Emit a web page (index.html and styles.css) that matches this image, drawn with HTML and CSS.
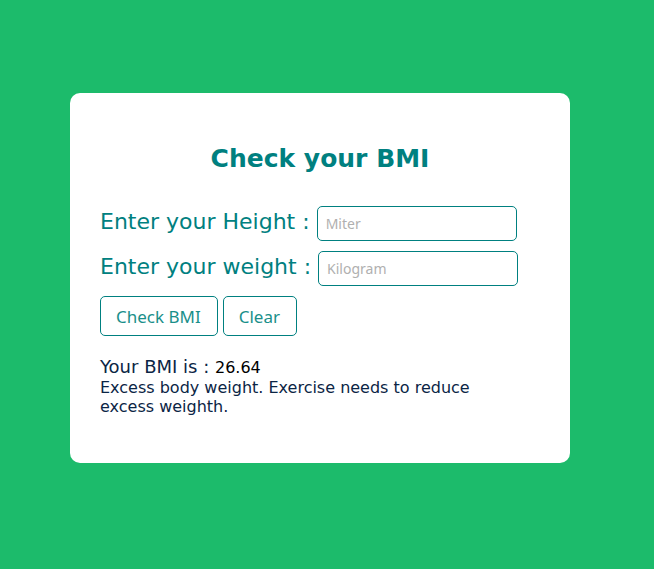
FILE: index.html
```html
<!DOCTYPE html>
<html>
<head>
<meta charset="utf-8">
<link rel="stylesheet" href="styles.css">
</head>
<body>
<div class="page">
  <div class="card">
    <h1 class="title">Check your BMI</h1>
    <div class="row">
      <label class="label">Enter your Height :</label>
      <input class="field" type="text" placeholder="Miter">
    </div>
    <div class="row">
      <label class="label">Enter your weight :</label>
      <input class="field" type="text" placeholder="Kilogram">
    </div>
    <div class="buttons">
      <button class="btn">Check BMI</button>
      <button class="btn">Clear</button>
    </div>
    <div class="result">
      <div class="bmi">Your BMI is : <span class="value">26.64</span></div>
      <div class="msg">Excess body weight. Exercise needs to reduce excess weighth.</div>
    </div>
  </div>
</div>
</body>
</html>
```
FILE: styles.css
```css
html, body {
  margin: 0;
  padding: 0;
  background: #1cbb6b;
  height: 100%;
}
.page {
  padding-top: 93px;
  padding-left: 70px;
}
.card {
  width: 500px;
  height: 370px;
  box-sizing: border-box;
  background: #fff;
  border-radius: 10px;
  padding: 46px 30px 0 30px;
  font-family: "DejaVu Sans", sans-serif;
}
.title {
  margin: 0 0 27px 0;
  text-align: center;
  color: #008080;
  font-size: 25px;
  line-height: 40px;
  font-weight: bold;
}
.row {
  display: flex;
  align-items: center;
  gap: 7px;
  margin-bottom: 10px;
}
.label {
  color: #008080;
  font-size: 22px;
  line-height: 28px;
  position: relative;
  top: -2px;
}
.field {
  width: 200px;
  height: 35px;
  box-sizing: border-box;
  border: 1px solid #008080;
  border-radius: 5px;
  padding: 0 8px;
  font-family: "Noto Sans", sans-serif;
  font-size: 14px;
  outline: none;
}
.field::placeholder {
  color: #b0b0b0;
}
.buttons {
  display: flex;
  gap: 5px;
  margin-bottom: 20px;
}
.btn {
  height: 40px;
  background: #fff;
  border: 1px solid #008080;
  border-radius: 5px;
  color: #1a8f8a;
  font-family: "Noto Sans", sans-serif;
  font-size: 17px;
  padding: 0 16px 0 15px;
}
.result {
  width: 420px;
}
.bmi {
  color: #0b2545;
  font-size: 18px;
  line-height: 21px;
}
.value {
  color: #000;
  font-size: 16px;
}
.msg {
  color: #0b2545;
  font-size: 16px;
  line-height: 19px;
}
```
